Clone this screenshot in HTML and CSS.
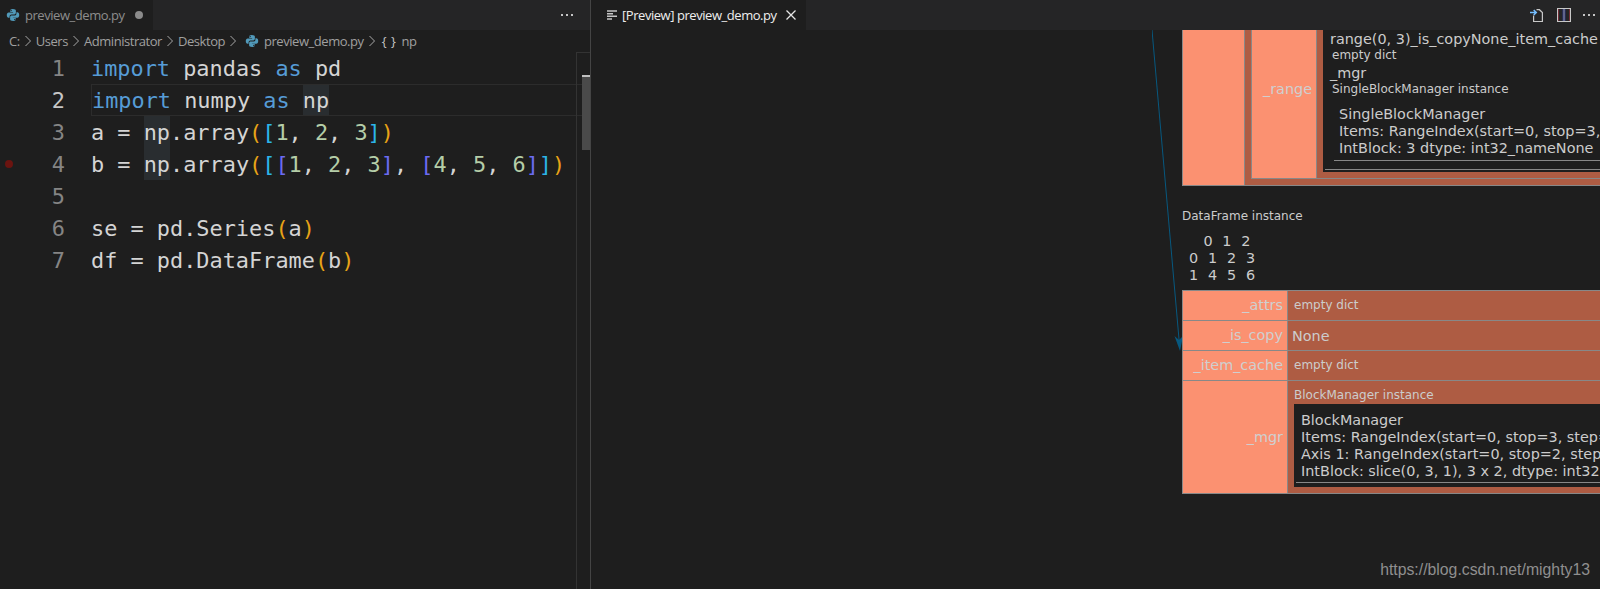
FILE: index.html
```html
<!DOCTYPE html>
<html lang="en">
<head>
<meta charset="utf-8">
<title>preview_demo.py</title>
<link rel="stylesheet" href="styles.css">
</head>
<body>
<svg class="defs" width="0" height="0" aria-hidden="true">
  <symbol id="py" viewBox="0 0 16 16">
    <path fill="#519aba" d="M7.600 1.200C5.400 1.200 4.900 2.200 4.900 3.100v1.400h3.200V5H3C1.800 5 .9 6 .9 8s.9 3.100 2 3.100h1.200V9.500c0-1.200 1-2.200 2.200-2.200h3.200c1 0 1.800-.8 1.800-1.800V3.100c0-1-.9-1.900-3.700-1.900zM6 2.300a.6.6 0 1 1 0 1.300.6.6 0 0 1 0-1.300z"/>
    <path fill="#519aba" d="M8.400 14.800c2.200 0 2.700-1 2.700-1.900v-1.400H7.900V11H13c1.200 0 2.100-1 2.100-3s-.9-3.100-2-3.100h-1.200v1.600c0 1.200-1 2.200-2.200 2.200H6.500c-1 0-1.800.8-1.800 1.800v2.400c0 1 .9 1.900 3.700 1.900zM10 13.700a.6.6 0 1 1 0-1.300.6.6 0 0 1 0 1.300z"/>
  </symbol>
  <symbol id="chev" viewBox="0 0 8 12">
    <path fill="none" stroke="#a8a8a8" stroke-width="1" d="M1.500 1l5 5-5 5"/>
  </symbol>
  <symbol id="dots" viewBox="0 0 12 2">
    <path fill="#c5c5c5" d="M0 0h2v2H0zM5 0h2v2H5zM10 0h2v2h-2z"/>
  </symbol>
</svg>
<div class="app">
  <section class="pane pane-left">
    <header class="tabbar">
      <div class="tab tab-dirty">
        <svg class="ico14"><use href="#py"/></svg>
        <span class="tab-name">preview_demo.py</span>
        <span class="dirty-dot"></span>
      </div>
      <div class="actions"><svg class="more"><use href="#dots"/></svg></div>
    </header>
    <nav class="crumbs">
      <span>C:</span><svg class="chev"><use href="#chev"/></svg>
      <span>Users</span><svg class="chev"><use href="#chev"/></svg>
      <span>Administrator</span><svg class="chev"><use href="#chev"/></svg>
      <span>Desktop</span><svg class="chev"><use href="#chev"/></svg>
      <svg class="ico14 crumb-ico"><use href="#py"/></svg>
      <span>preview_demo.py</span><svg class="chev"><use href="#chev"/></svg>
      <span class="braces">{ }</span><span>np</span>
    </nav>
    <div class="editor">
      <div class="line"><span class="gutter"></span><span class="ln">1</span><code class="code"><i class="kw">import</i> pandas <i class="kw">as</i> pd</code></div>
      <div class="line line-active"><span class="gutter"></span><span class="ln">2</span><code class="code"><i class="kw">import</i> numpy <i class="kw">as</i> <b class="hl">np</b></code></div>
      <div class="line"><span class="gutter"></span><span class="ln">3</span><code class="code">a = <b class="hl">np</b>.array<i class="b1">(</i><i class="b2">[</i><i class="num">1</i>, <i class="num">2</i>, <i class="num">3</i><i class="b2">]</i><i class="b1">)</i></code></div>
      <div class="line"><span class="gutter"><span class="bp"></span></span><span class="ln">4</span><code class="code">b = <b class="hl">np</b>.array<i class="b1">(</i><i class="b2">[</i><i class="b3">[</i><i class="num">1</i>, <i class="num">2</i>, <i class="num">3</i><i class="b3">]</i>, <i class="b3">[</i><i class="num">4</i>, <i class="num">5</i>, <i class="num">6</i><i class="b3">]</i><i class="b2">]</i><i class="b1">)</i></code></div>
      <div class="line"><span class="gutter"></span><span class="ln">5</span><code class="code"></code></div>
      <div class="line"><span class="gutter"></span><span class="ln">6</span><code class="code">se = pd.Series<i class="b1">(</i>a<i class="b1">)</i></code></div>
      <div class="line"><span class="gutter"></span><span class="ln">7</span><code class="code">df = pd.DataFrame<i class="b1">(</i>b<i class="b1">)</i></code></div>
      <div class="overview"><div class="thumb"></div></div>
    </div>
  </section>

  <section class="pane pane-right">
    <header class="tabbar">
      <div class="tab tab-active">
        <svg class="ico-lines" viewBox="0 0 12 12"><path stroke="#c5c5c5" stroke-width="1.400" d="M1 2h10M1 4.700h6M1 7.300h10M1 10h5"/></svg>
        <span class="tab-name">[Preview] preview_demo.py</span>
        <svg class="ico-close" viewBox="0 0 12 12"><path stroke="#e6e6e6" stroke-width="1.300" fill="none" d="M1.500 1.500l9 9M10.500 1.500l-9 9"/></svg>
      </div>
      <div class="actions actions-right">
        <svg class="ico-open" viewBox="0 0 13 13"><path fill="none" stroke="#c8c8c8" stroke-width="1.200" d="M3.600 6.500v6h8.800V3.600L9.400.7H6.500"/><path fill="none" stroke="#75beff" stroke-width="1.500" d="M0 3.500h6M3.700 1l2.600 2.500L3.700 6"/></svg>
        <svg class="ico-split" viewBox="0 0 14 14"><rect x=".5" y=".5" width="13" height="13" fill="none" stroke="#c8c8c8"/><path stroke="#c8c8c8" d="M7 0v14"/><path stroke="#a03040" stroke-opacity=".6" d="M1.500 1v12M12.500 1v12"/><path stroke="#3040c0" stroke-opacity=".6" d="M6 1v12M8 1v12"/></svg>
        <svg class="more"><use href="#dots"/></svg>
      </div>
    </header>
    <div class="canvas">
      <svg class="arrow" viewBox="0 0 60 330" width="60" height="330"><path stroke="#07587f" fill="none" d="M0 0L27.500 315"/><path fill="#07587f" d="M22.500 306l4.500 4 4-4-3 15z"/></svg>

      <div class="node node-top">
        <div class="nt-key"></div>
        <div class="nt-val">
          <div class="nested">
            <div class="nested-key key-text">_range</div>
            <div class="nested-val">
              <div class="blackbox">
                <div class="t-big">range(0, 3)_is_copyNone_item_cache</div>
                <div class="t-small">empty dict</div>
                <div class="t-big t-mgr">_mgr</div>
                <div class="t-small">SingleBlockManager instance</div>
                <div class="mgr-text">SingleBlockManager
Items: RangeIndex(start=0, stop=3, step=1)
IntBlock: 3 dtype: int32_nameNone</div>
                <div class="rule rule-inner"></div>
                <div class="rule rule-outer"></div>
              </div>
            </div>
          </div>
        </div>
      </div>

      <div class="node node-frame">
        <div class="frame-title">DataFrame instance</div>
        <div class="frame-pre">   0  1  2
0  1  2  3
1  4  5  6</div>
        <div class="frame-grid">
          <div class="fk key-text">_attrs</div><div class="fv fv-small t-small">empty dict</div>
          <div class="fk key-text">_is_copy</div><div class="fv fv-none">None</div>
          <div class="fk key-text">_item_cache</div><div class="fv fv-small t-small">empty dict</div>
          <div class="fk key-text">_mgr</div>
          <div class="fv fv-mgr">
            <div class="t-small mgr-title">BlockManager instance</div>
            <div class="mgr-box">
              <div class="mgr-text">BlockManager
Items: RangeIndex(start=0, stop=3, step=1)
Axis 1: RangeIndex(start=0, stop=2, step=1)
IntBlock: slice(0, 3, 1), 3 x 2, dtype: int32</div>
              <div class="rule"></div>
            </div>
          </div>
        </div>
      </div>
    </div>
    <div class="watermark">https://blog.csdn.net/mighty13</div>
  </section>
</div>
</body>
</html>
```
FILE: styles.css
```css
* { box-sizing: border-box; }
html, body { margin: 0; height: 100%; background: #1e1e1e; }
.defs { position: absolute; }
.app { display: flex; width: 1600px; height: 589px; overflow: hidden; background: #1e1e1e; color: #ccc; }
.pane { position: relative; display: flex; flex-direction: column; height: 100%; }
.pane-left { width: 590px; flex: none; }
.pane-right { flex: 1; min-width: 0; border-left: 1px solid #444; }

.tabbar { display: flex; align-items: stretch; height: 30px; flex: none; background: #252526; }
.tab { display: flex; align-items: center; background: #1e1e1e; font: 13px/30px "Open Sans", sans-serif; }
.tab-dirty { width: 153px; padding-left: 6px; color: #8d8d8d; }
.tab-dirty .tab-name { margin-left: 5px; }
.tab-name { letter-spacing: -.45px; white-space: nowrap; }
.dirty-dot { width: 8px; height: 8px; margin-left: 10px; border-radius: 50%; background: #8b8b8b; }
.tab-active { width: 215px; padding-left: 15px; color: #eee; }
.tab-active .tab-name { margin-left: 4px; }
.actions { display: flex; align-items: center; margin-left: auto; padding-right: 17px; }
.actions-right { padding-right: 5px; }
.more { width: 12px; height: 2px; flex: none; }
.ico14 { width: 14px; height: 14px; flex: none; }
.ico-lines { width: 12px; height: 12px; flex: none; }
.ico-close { width: 12px; height: 12px; flex: none; margin-left: 8px; }
.ico-open { width: 13px; height: 13px; margin-right: 14px; }
.ico-split { width: 14px; height: 14px; margin-right: 12px; }

.crumbs { display: flex; align-items: center; height: 22px; flex: none; padding-left: 9px; color: #a0a0a0; font: 13px/22px "Open Sans", sans-serif; letter-spacing: -.45px; white-space: nowrap; }
.chev { width: 8px; height: 12px; flex: none; margin: 0 4px; }
.crumb-ico { margin: 0 5px 0 4px; }
.braces { margin: 0 5px 0 2px; color: #c5c5c5; letter-spacing: .6px; }

.editor { position: relative; flex: 1; font: 21.880px/34px "DejaVu Sans Mono", monospace; color: #d4d4d4; }
.line { display: flex; height: 32px; white-space: pre; }
.gutter { display: flex; align-items: center; width: 40px; height: 32px; flex: none; padding-left: 5px; }
.bp { width: 8px; height: 8px; border-radius: 50%; background: #6b1410; }
.ln { width: 25px; flex: none; text-align: right; color: #858585; }
.line-active .ln { color: #c6c6c6; }
.code { flex: 1; margin-left: 26px; margin-right: 14px; font: inherit; height: 32px; }
.line-active .code { border: 1px solid #2c2c2c; border-right: 0; line-height: 32px; margin-right: 0; }
.code i, .code b { font-style: normal; font-weight: normal; }
.kw { color: #569cd6; }
.num { color: #b5cea8; }
.b1 { color: #e8a317; }
.b2 { color: #2cb5e9; }
.b3 { color: #6b6bf2; }
.hl { display: inline-block; height: 32px; background: #292d30; }
.line-active .hl { height: 30px; }
.overview { position: absolute; top: 0; right: 0; bottom: 0; width: 14px; border-left: 1px solid #333; border-top: 1px solid #333; }
.thumb { position: absolute; top: 22px; left: 5px; width: 8px; height: 75px; background: #4a4a4a; }
.thumb::before { content: ""; position: absolute; top: 0; left: 0; width: 8px; height: 2px; background: #c0c0c0; }

.canvas { position: relative; flex: 1; overflow: hidden; }
.arrow { position: absolute; left: 561px; top: 0; }
.node { position: absolute; left: 591px; width: 700px; font: 14.400px/17px "DejaVu Sans", sans-serif; color: #ccc; }
.key-text { text-align: right; color: #cfcfcf; font-size: 14.400px; }
.t-small { font: 12px/16px "DejaVu Sans", sans-serif; }
.mgr-text { white-space: pre; font: 14.400px/17px "DejaVu Sans", sans-serif; }

.node-top { top: -30px; height: 186px; display: flex; border: 1px solid #888; border-top: 0; background: #888; }
.nt-key { width: 61px; flex: none; background: #fb9171; }
.nt-val { flex: 1; margin-left: 1px; padding: 0 0 6px 6px; background: #ae5c43; }
.nested { display: flex; height: 100%; border: 1px solid #888; border-top: 0; background: #888; }
.nested-key { display: flex; align-items: center; justify-content: flex-end; width: 64px; flex: none; padding: 0 4px 0 0; background: #fb9171; }
.nested-val { flex: 1; margin-left: 1px; padding: 0 0 6px 6px; background: #ae5c43; }
.blackbox { display: flow-root; height: 100%; padding: 30px 0 0 7px; background: #1e1e1e; }
.t-big { height: 17px; font-size: 14.400px; line-height: 19px; white-space: nowrap; }
.blackbox .t-small { margin-left: 2px; }
.t-mgr { margin-top: 1px; }
.blackbox .mgr-text { margin: 9px 0 0 9px; }
.rule { height: 1px; background: #888; margin-top: 2px; }
.rule-inner { margin: 3px 0 0 4px; }
.rule-outer { margin: 8px 0 0 -5px; }

.node-frame { top: 178px; }
.frame-title { font: 12px/16px "DejaVu Sans", sans-serif; }
.frame-pre { margin: 9px 0 6px 7px; white-space: pre; letter-spacing: .22px; }
.frame-grid { display: grid; grid-template-columns: 104px 1fr; grid-template-rows: 29px 29px 29px 112px; gap: 1px; padding: 1px; background: #888; }
.fk { display: flex; align-items: center; justify-content: flex-end; padding: 0 4px 0 0; background: #fb9171; }
.fv { display: flex; align-items: center; padding-left: 6px; background: #ae5c43; }
.fv-small { padding-bottom: 2px; }
.fv-none { padding: 2px 0 0 4px; }
.fv-mgr { display: block; padding: 6px 0 6px 6px; }
.mgr-box { height: 83px; margin-top: 1px; padding: 8px 0 0 2px; background: #1e1e1e; }
.mgr-box .mgr-text { padding-left: 5px; }

.watermark { position: absolute; right: 10px; top: 558px; font: 15.800px/24px "Liberation Sans", sans-serif; color: #8f8f8f; white-space: nowrap; }
```
